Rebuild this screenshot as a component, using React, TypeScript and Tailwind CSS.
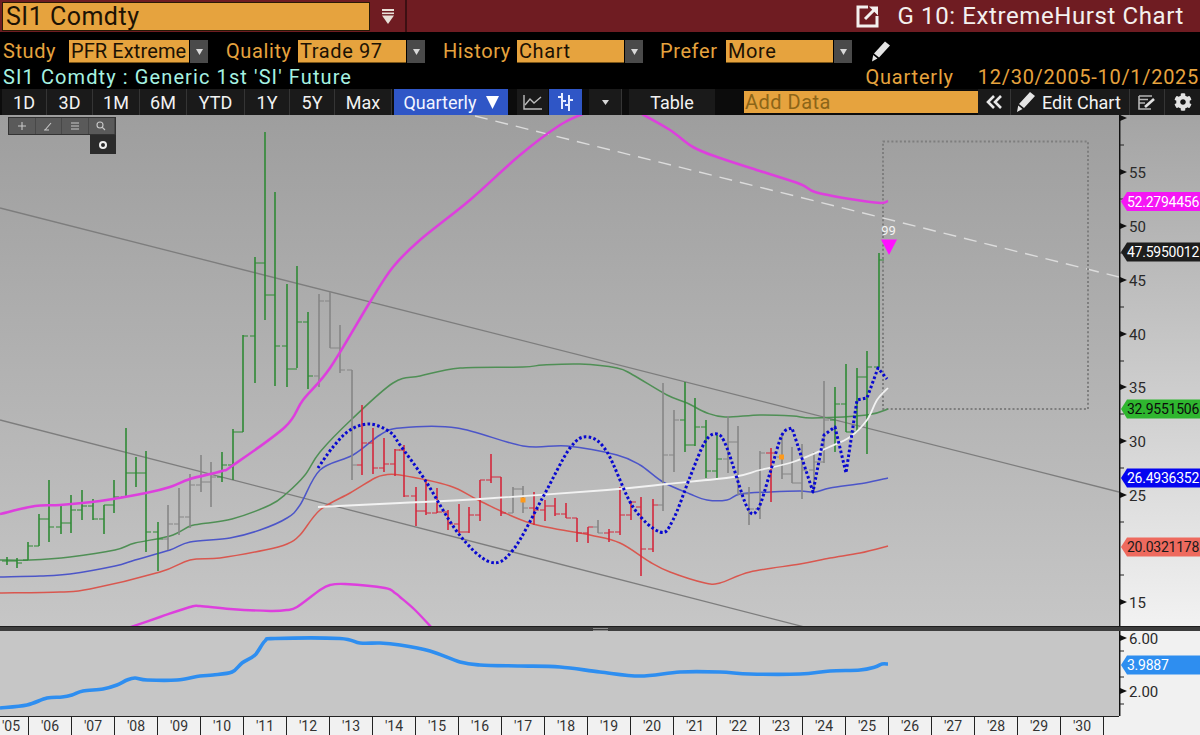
import React from "react";
import { FaCog } from "react-icons/fa";

type Pt = [number, number];
const smooth = (p: Pt[]) => {
  let d = `M${p[0][0]} ${p[0][1]}`;
  for (let i = 0; i < p.length - 1; i++) {
    const a = p[Math.max(0, i - 1)], b = p[i], c = p[i + 1], e = p[Math.min(p.length - 1, i + 2)];
    const k = 6;
    d += ` C${(b[0] + (c[0] - a[0]) / k).toFixed(1)} ${(b[1] + (c[1] - a[1]) / k).toFixed(1)} ${(c[0] - (e[0] - b[0]) / k).toFixed(1)} ${(c[1] - (e[1] - b[1]) / k).toFixed(1)} ${c[0]} ${c[1]}`;
  }
  return d;
};

const G = "#2f8a35", N = "#868686", R = "#d4283c";
// x, high, low, open tick, close tick, colour
const bars: [number, number, number, number, number, string][] = [
  [7, 557, 565, 561, 561, G], [17, 558, 568, 561, 563, G], [28, 542, 560, 560, 546, G], [39, 514, 546, 546, 519, G],
  [49, 480, 542, 519, 527, G], [61, 504, 534, 527, 523, G], [71, 495, 533, 523, 510, G], [82, 490, 520, 510, 506, G],
  [93, 499, 520, 506, 519, G], [104, 505, 534, 519, 505, G], [114, 480, 513, 505, 497, G], [126, 428, 497, 497, 473, G],
  [136, 457, 487, 473, 473, G], [146, 451, 552, 473, 532, G], [158, 522, 571, 532, 539, G],
  [168, 505, 550, 539, 524, N], [179, 488, 535, 524, 517, N], [190, 474, 528, 517, 485, N], [201, 455, 492, 485, 482, N], [211, 462, 507, 482, 477, N],
  [222, 452, 482, 477, 465, G], [233, 429, 480, 465, 432, G], [243, 335, 432, 432, 336, G], [255, 257, 383, 336, 263, G],
  [265, 132, 320, 263, 295, G], [275, 192, 386, 295, 346, G], [287, 284, 387, 346, 369, G], [297, 266, 368, 369, 322, G], [308, 312, 389, 322, 376, G],
  [319, 294, 387, 376, 301, N], [330, 292, 348, 301, 348, N], [340, 325, 373, 348, 370, N], [352, 370, 480, 370, 465, N],
  [362, 405, 475, 465, 443, R], [373, 428, 474, 443, 468, R], [384, 438, 472, 468, 464, R], [395, 449, 476, 464, 450, R],
  [404, 445, 497, 450, 496, R], [416, 487, 526, 496, 511, R], [426, 480, 515, 511, 513, R], [437, 488, 513, 513, 512, R],
  [448, 510, 530, 512, 524, R], [459, 504, 533, 524, 532, R], [469, 507, 533, 532, 515, R], [480, 480, 521, 515, 480, R],
  [491, 454, 483, 480, 477, R], [501, 477, 516, 477, 513, R],
  [513, 487, 513, 513, 489, N], [523, 486, 513, 489, 508, N],
  [534, 492, 525, 508, 510, R], [545, 500, 521, 510, 506, R], [555, 498, 516, 506, 514, R], [566, 503, 518, 514, 518, R], [577, 518, 542, 518, 533, R], [588, 527, 543, 533, 527, R],
  [598, 520, 533, 527, 533, N],
  [609, 529, 542, 533, 532, R], [620, 487, 535, 532, 515, R], [631, 501, 520, 515, 502, R], [641, 497, 576, 507, 549, R], [653, 499, 552, 549, 505, R],
  [663, 383, 511, 505, 455, N], [674, 410, 472, 455, 420, N],
  [685, 382, 452, 420, 445, G], [695, 398, 446, 445, 427, G], [706, 420, 478, 427, 471, G], [717, 435, 478, 471, 459, G],
  [728, 416, 473, 459, 442, N], [738, 426, 495, 442, 494, N], [749, 487, 525, 494, 509, N], [760, 451, 519, 509, 453, N],
  [771, 448, 502, 453, 453, R],
  [782, 435, 479, 457, 474, N], [792, 447, 483, 474, 483, N], [802, 444, 499, 483, 470, N], [814, 452, 493, 470, 462, N], [824, 381, 463, 462, 420, N],
  [835, 387, 452, 420, 404, G], [846, 364, 432, 404, 432, G], [857, 368, 432, 432, 377, G], [867, 351, 454, 377, 367, G], [879, 253, 367, 367, 260, G],
];

const magentaTop: Pt[] = [[0, 514], [35, 506], [60, 505], [100, 501], [146, 493], [170, 487], [190, 479], [222, 471], [232, 466], [285, 427], [303, 400], [330, 368], [370, 302], [393, 267], [420, 240], [470, 200], [520, 155], [560, 125], [585, 113]];
const magentaTop2: Pt[] = [[640, 113], [670, 130], [693, 147], [717, 157], [760, 171], [800, 184], [815, 192], [850, 199], [880, 203], [888, 201]];
const magentaLow: Pt[] = [[128, 628], [160, 617], [190, 607], [200, 606], [230, 609], [270, 611], [287, 610], [297, 607], [320, 590], [330, 585], [345, 584], [385, 588], [395, 593], [400, 597], [415, 610], [432, 628]];
const green: Pt[] = [[0, 560], [30, 560], [70, 557], [115, 550], [135, 543], [170, 536], [190, 526], [200, 524], [232, 519], [270, 505], [287, 493], [305, 475], [320, 452], [352, 419], [393, 383], [420, 376], [460, 368], [523, 367], [543, 365], [580, 364], [617, 368], [633, 375], [667, 395], [687, 403], [707, 413], [725, 417], [760, 415], [793, 416], [813, 418], [867, 415], [888, 409]];
const blue: Pt[] = [[0, 577], [40, 576], [70, 574], [115, 566], [135, 560], [170, 550], [190, 542], [230, 538], [260, 530], [287, 518], [300, 505], [320, 470], [353, 455], [380, 435], [400, 428], [457, 428], [523, 446], [567, 446], [617, 455], [640, 465], [663, 482], [690, 494], [707, 500], [727, 500], [740, 494], [770, 492], [800, 491], [815, 492], [830, 488], [865, 483], [888, 478]];
const red: Pt[] = [[0, 593], [60, 592], [90, 589], [160, 572], [190, 560], [220, 558], [265, 550], [287, 544], [300, 535], [320, 510], [350, 493], [375, 478], [385, 475], [400, 475], [450, 486], [480, 501], [530, 523], [590, 535], [620, 543], [650, 562], [670, 572], [705, 583], [720, 583], [750, 572], [800, 564], [830, 558], [860, 553], [888, 546]];
const white: Pt[] = [[318, 507], [400, 503], [480, 499], [607, 490], [667, 484], [733, 477], [760, 470], [793, 462], [827, 448], [850, 437], [867, 420], [877, 400], [888, 388]];
const wave: Pt[] = [[318, 468], [333, 447], [350, 430], [370, 424], [390, 432], [400, 445], [425, 480], [458, 533], [490, 562], [513, 550], [543, 497], [570, 448], [588, 437], [607, 452], [633, 507], [660, 532], [673, 520], [690, 477], [705, 442], [717, 434], [727, 448], [747, 507], [758, 509], [770, 473], [782, 435], [792, 428]];
const waveEnd = "L813 492 L824 435 L835 427 L846 473 L857 400 L867 398 L878 368 L887 379";
const osc: Pt[] = [[0, 708], [27, 705], [47, 698], [62, 697], [72, 695], [83, 691], [103, 689], [117, 685], [127, 680], [135, 678], [147, 680], [177, 680], [200, 676], [213, 675], [232, 672], [242, 663], [255, 655], [265, 641], [275, 638.5], [340, 638.5], [360, 643], [380, 643], [400, 645], [430, 651], [460, 662], [480, 665], [520, 666], [560, 667], [600, 672], [640, 676], [680, 672], [720, 672], [750, 674], [800, 674], [830, 671], [860, 670], [875, 667], [882, 664], [888, 664]];

const Field = ({ label, value, labelCls, inputCls, wrapCls }: { label: string; value: string; labelCls: string; inputCls: string; wrapCls: string }) => (
  <div className={`flex items-center ${wrapCls}`}>
    <span className={`text-[#e6a33e] text-[20px] tracking-[0.6px] leading-[23px] ${labelCls}`}>{label}</span>
    <span className={`h-[23px] bg-[#e6a33e] text-[#1c1204] text-[20px] leading-[23px] pl-[2px] overflow-hidden whitespace-nowrap border-b border-[#7a5518] ${inputCls}`}>{value}</span>
    <span className="ml-[1px] w-[18px] h-[23px] bg-[#4a4a4a] flex items-center justify-center text-[#d8d8d8]">
      <svg width="7" height="6" viewBox="0 0 7 6"><path d="M0 0H7L3.5 6Z" fill="currentColor" /></svg>
    </span>
  </div>
);

const Btn = ({ t, w }: { t: string; w: string }) => (
  <div className={`h-full flex items-center justify-center bg-[#1a1a1a] border-r border-[#353535] text-[#f2f2f2] text-[18px] ${w}`}>{t}</div>
);

const Pencil = ({ w, h, color }: { w: number; h: number; color: string }) => (
  <svg width={w} height={h} viewBox="0 0 18 20"><path d="M13 0L18 4L7 16L2 12Z M1.2 13.5L5.5 17L0 20Z" fill={color} /></svg>
);

const Badge = ({ y, fill, color, text }: { y: number; fill: string; color: string; text: string }) => (
  <g>
    <polygon points={`1121,${y} 1127,${y - 9.5} 1200,${y - 9.5} 1200,${y + 9.5} 1127,${y + 9.5}`} fill={fill} />
    <text x="1127" y={y + 5} fontSize="14" letterSpacing="-0.25" fill={color}>{text}</text>
  </g>
);

const Major = ({ y, label }: { y: number; label: string }) => (
  <g>
    <polygon points={`1120,${y - 3} 1127,${y} 1120,${y + 3}`} fill="#111" />
    <text x="1129" y={y + 5.5} fontSize="15" fill="#2a2a2a">{label}</text>
  </g>
);

const years = ["'06", "'07", "'08", "'09", "'10", "'11", "'12", "'13", "'14", "'15", "'16", "'17", "'18", "'19", "'20", "'21", "'22", "'23", "'24", "'25", "'26", "'27", "'28", "'29", "'30"];

export default function App() {
  return (
    <div className="w-[1200px] h-[735px] overflow-hidden flex flex-col bg-black font-[Roboto,sans-serif]">
      {/* title bar */}
      <div className="h-8 shrink-0 bg-[#6f1c22] flex items-center">
        <div className="ml-[2px] w-[368px] h-[29px] bg-[#e6a33e] border border-[#2a1a06] text-[#1c1204] text-[25px] tracking-[0.5px] leading-[28px] pl-[3px]">SI1 Comdty</div>
        <div className="w-[37px] h-full flex items-center justify-center border-r-2 border-[#3c0f12]">
          <svg width="12" height="15" viewBox="0 0 12 15"><rect width="12" height="2" fill="#e8e0d8" /><rect y="3.5" width="12" height="1.6" fill="#e8e0d8" /><path d="M0 6.5H12L6 15Z" fill="#e8e0d8" /></svg>
        </div>
        <div className="ml-auto flex items-center mr-[16px]">
          <svg width="24" height="24" viewBox="0 0 24 24" fill="none" stroke="#f4f0ee" strokeWidth="3">
            <path d="M12 3H2V22H21V12" />
            <path d="M9 15L20 4" />
            <path d="M13 2.5H22V11.5Z" fill="#f4f0ee" stroke="none" />
          </svg>
          <span className="ml-[18px] text-[#f4f0ee] text-[24px] tracking-[0.6px] leading-8 whitespace-nowrap">G 10: ExtremeHurst Chart</span>
        </div>
      </div>
      {/* study row */}
      <div className="h-[33px] shrink-0 pt-2 flex items-start">
        <Field wrapCls="" label="Study" value="PFR Extreme" labelCls="w-[69px] pl-[3px]" inputCls="w-[120px] tracking-[0.1px]" />
        <Field wrapCls="ml-[18px]" label="Quality" value="Trade 97" labelCls="w-[72px]" inputCls="w-[108px] tracking-[0.6px]" />
        <Field wrapCls="ml-[18px]" label="History" value="Chart" labelCls="w-[74px]" inputCls="w-[107px] tracking-[0.6px]" />
        <Field wrapCls="ml-[17px]" label="Prefer" value="More" labelCls="w-[66px]" inputCls="w-[107px] tracking-[0.6px]" />
        <div className="ml-[20px] h-[23px] flex items-center"><Pencil w={18} h={21} color="#e4e4e4" /></div>
      </div>
      {/* description row */}
      <div className="h-6 shrink-0 flex items-center text-[20px] whitespace-nowrap">
        <span className="pl-[3px] tracking-[1.1px] text-[#a6f2e2]">SI1 Comdty : Generic 1st 'SI' Future</span>
        <span className="ml-auto tracking-[0.8px] text-[#e6a33e]">Quarterly</span>
        <span className="ml-[24px] mr-[1px] tracking-[0.7px] text-[#e6a33e]">12/30/2005-10/1/2025</span>
      </div>
      {/* toolbar */}
      <div className="h-[26px] shrink-0 flex items-stretch pl-[2px] bg-[#0c0c0c]">
        <Btn t="1D" w="w-[45px]" />
        <Btn t="3D" w="w-[46px]" />
        <Btn t="1M" w="w-[47px]" />
        <Btn t="6M" w="w-[47px]" />
        <Btn t="YTD" w="w-[58px]" />
        <Btn t="1Y" w="w-[45px]" />
        <Btn t="5Y" w="w-[45px]" />
        <Btn t="Max" w="w-[57px]" />
        <div className="ml-[2px] w-[114px] bg-[#2f56c6] flex items-center justify-center gap-[9px] text-[#f2f4ff] text-[18px]">
          Quarterly
          <svg width="13" height="13" viewBox="0 0 13 13"><path d="M0 0H13L6.5 13Z" fill="#fff" /></svg>
        </div>
        <div className="ml-[9px] w-[31px] bg-[#1a1a1a] flex items-center justify-center">
          <svg width="20" height="16" viewBox="0 0 20 16" fill="none" stroke="#bcbcbc" strokeWidth="1.4"><path d="M1 1V15H19" /><path d="M2 11L7 5L11 9L18 3" /></svg>
        </div>
        <div className="ml-[1px] w-[33px] bg-[#2f56c6] flex items-center justify-center">
          <svg width="17" height="20" viewBox="0 0 17 20" fill="none" stroke="#e6ecff" strokeWidth="2"><path d="M5 1V17M1 5H5M5 9H9M12 3V19M8 13H12M12 8H16" /></svg>
        </div>
        <div className="ml-[7px] w-[33px] bg-[#1a1a1a] border-r border-[#353535] flex items-center justify-center">
          <svg width="7" height="5" viewBox="0 0 7 5"><path d="M0 0H7L3.5 5Z" fill="#d8d8d8" /></svg>
        </div>
        <div className="ml-[7px] w-[86px] bg-[#1a1a1a] flex items-center justify-center text-[#f2f2f2] text-[18px]">Table</div>
        <div className="ml-[29px] w-[234px] my-[2px] bg-[#e6a33e] text-[#8c6518] text-[20px] tracking-[0.5px] leading-[22px] pl-[1px]">Add Data</div>
        <div className="w-[32px] bg-[#1a1a1a] flex items-center justify-center text-[#e8e8e8]">
          <svg width="16" height="14" viewBox="0 0 16 14" fill="none" stroke="currentColor" strokeWidth="2.6"><path d="M8 1L2 7L8 13M15 1L9 7L15 13" /></svg>
        </div>
        <div className="w-[120px] bg-[#1a1a1a] border-x border-[#353535] flex items-center pl-[6px] gap-[7px] text-[#f2f2f2] text-[18px] whitespace-nowrap">
          <Pencil w={18} h={20} color="#e4e4e4" />Edit Chart
        </div>
        <div className="w-[34px] bg-[#1a1a1a] flex items-center justify-center">
          <svg width="18" height="15" viewBox="0 0 18 15" fill="none" stroke="#b4b4b4" strokeWidth="1.6"><path d="M1 1H14M1 4.5H10M1 8H7M1 1V14H13" /><path d="M7 12L16 4" strokeWidth="2.6" stroke="#e0e0e0" /></svg>
        </div>
        <div className="flex-1 bg-[#1a1a1a] border-l border-[#353535] flex items-center justify-center"><FaCog className="text-[#e4e4e4] text-[18px]" /></div>
      </div>
      {/* price pane */}
      <div className="h-[511px] shrink-0 flex relative">
        <div className="w-[1119px] h-full bg-gradient-to-b from-[#9e9e9e] to-[#c6c6c6]">
          <svg className="block" width="1119" height="511" viewBox="0 115 1119 511" fill="none" strokeLinejoin="round">
            <path d="M0 208L1119 492" stroke="#7d7d7d" strokeWidth="1.3" />
            <path d="M0 420L820 631" stroke="#7d7d7d" strokeWidth="1.3" />
            <path d="M475 116L1119 277" stroke="#dcdcdc" strokeWidth="1.4" strokeDasharray="13 8" />
            <rect x="883" y="141.5" width="205" height="267.5" stroke="#7e7e7e" strokeWidth="2" strokeDasharray="2 2.2" />
            <path d={smooth(green)} stroke="#4f8f55" strokeWidth="1.5" />
            <path d={smooth(blue)} stroke="#4c55c8" strokeWidth="1.5" />
            <path d={smooth(red)} stroke="#d9574f" strokeWidth="1.5" />
            {bars.map(([x, hi, lo, o, c, col], i) => (
              <g key={i} stroke={col}>
                <path d={`M${x} ${hi}V${lo}`} strokeWidth="1.6" />
                <path d={`M${x - 5} ${o}H${x}M${x} ${c}H${x + 5}`} strokeWidth="1.2" />
              </g>
            ))}
            <path d={smooth(white)} stroke="#f2f2f2" strokeWidth="1.8" />
            <path d={smooth(magentaTop)} stroke="#dd3fdd" strokeWidth="2.6" />
            <path d={smooth(magentaTop2)} stroke="#dd3fdd" strokeWidth="2.6" />
            <path d={smooth(magentaLow)} stroke="#dd3fdd" strokeWidth="2.4" />
            <path d={smooth(wave) + waveEnd} stroke="#0808d0" strokeWidth="3" strokeDasharray="2.6 2.3" />
            <rect x="520.5" y="497.5" width="5" height="5" fill="#ff9a1a" />
            <rect x="779" y="454.5" width="5" height="5" fill="#ff9a1a" />
            <text x="888.5" y="235" fontSize="13" fill="#f4f4f4" textAnchor="middle" fontFamily="Roboto, sans-serif">99</text>
            <polygon points="881,239.5 897,239.5 889,255" fill="#ff10ff" />
          </svg>
        </div>
        <div className="w-[81px] h-full bg-gradient-to-b from-[#a4a4a4] to-[#f2f2f2]">
          <svg className="block" width="81" height="511" viewBox="1119 115 81 511" fill="none">
            <path d="M1119.7 115V626" stroke="#111" strokeWidth="1.5" />
            {[145, 199, 253, 307, 361, 414, 468, 522, 575].map((y) => (
              <path key={y} d={`M1120 ${y}H1124`} stroke="#222" strokeWidth="1" />
            ))}
            <polygon points="1120,115 1127,118 1120,121" fill="#111" />
            <Major y={172} label="55" />
            <Major y={226} label="50" />
            <Major y={280} label="45" />
            <Major y={334} label="40" />
            <Major y={387} label="35" />
            <Major y={441} label="30" />
            <Major y={495} label="25" />
            <Major y={602} label="15" />
            <Badge y={201.5} fill="#f516f5" color="#fff" text="52.2794456" />
            <Badge y={252} fill="#1d1d1d" color="#fff" text="47.5950012" />
            <Badge y={409} fill="#2fb62f" color="#0c0c0c" text="32.9551506" />
            <Badge y={478} fill="#0505f0" color="#fff" text="26.4936352" />
            <Badge y={547} fill="#ee6a5e" color="#1a1a1a" text="20.0321178" />
          </svg>
        </div>
        {/* floating chart tools */}
        <div className="absolute left-[8px] top-[2px] flex flex-col items-end">
          <div className="w-[108px] h-[18px] flex bg-[#5a5a5a] border border-[#333]">
            {["M5 1V9M1 5H9", "M2 9L8 2M1 9H6", "M1 2H9M1 5H9M1 8H9", "M4 4m-3 0a3 3 0 1 0 6 0a3 3 0 1 0-6 0M6 6L9 9"].map((d, i) => (
              <div key={i} className="flex-1 flex items-center justify-center border-r border-[#484848]">
                <svg width="10" height="10" viewBox="0 0 10 10" fill="none" stroke="#c8c8c8" strokeWidth="1.1"><path d={d} /></svg>
              </div>
            ))}
          </div>
          <div className="w-[26px] h-[19px] bg-[#2b2b2b] flex items-center justify-center">
            <div className="w-[8px] h-[8px] rounded-full border-[2.5px] border-[#f0f0f0]" />
          </div>
        </div>
      </div>
      {/* splitter */}
      <div className="h-[5px] shrink-0 bg-[#3d3d3d] border-t border-[#1e1e1e] flex justify-center items-center">
        <div className="w-[15px] h-[3px] border-y border-[#8a8a8a]" />
      </div>
      {/* oscillator pane */}
      <div className="h-[85px] shrink-0 flex">
        <div className="w-[1119px] h-full bg-[#c6c6c6]">
          <svg className="block" width="1119" height="85" viewBox="0 631 1119 85" fill="none">
            <path d={smooth(osc)} stroke="#2e8ef0" strokeWidth="3.6" strokeLinejoin="round" />
          </svg>
        </div>
        <div className="w-[81px] h-full bg-[#f1f1f1]">
          <svg className="block" width="81" height="85" viewBox="1119 631 81 85" fill="none">
            <path d="M1119.7 631V716" stroke="#111" strokeWidth="1.5" />
            {[651, 677, 704].map((y) => (
              <path key={y} d={`M1120 ${y}H1124`} stroke="#222" strokeWidth="1" />
            ))}
            <Major y={638} label="6.00" />
            <Major y={691} label="2.00" />
            <Badge y={665} fill="#2e8ef0" color="#fff" text="3.9887" />
          </svg>
        </div>
      </div>
      {/* time axis */}
      <div className="h-[19px] shrink-0 bg-[#f1f1f1] flex text-[14px] text-[#333] leading-[19px]">
        <div className="w-[29px] border-t border-r border-[#222] pr-[6px] text-center">'05</div>
        {years.map((y) => (
          <div key={y} className="w-[43px] border-t border-r border-[#222] text-center">{y}</div>
        ))}
        <div className="w-[15px] border-t border-[#222]" />
      </div>
    </div>
  );
}
